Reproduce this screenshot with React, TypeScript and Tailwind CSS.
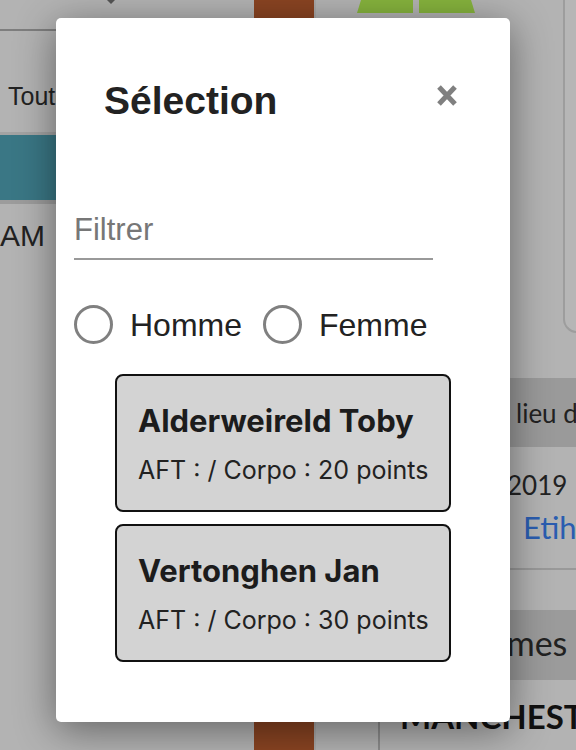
import React from 'react';

type Player = { name: string; aft: string; corpo: number };

const players: Player[] = [
  { name: 'Alderweireld Toby', aft: '', corpo: 20 },
  { name: 'Vertonghen Jan', aft: '', corpo: 30 },
];

function Radio({ label }: { label: string }) {
  return (
    <label className="flex items-center gap-[17px] cursor-pointer">
      <span className="block w-[39px] h-[39px] rounded-full border-[3px] border-[#808080] bg-white" />
      <span className="text-[32px] leading-none text-[#222]">{label}</span>
    </label>
  );
}

function PlayerCard({ p }: { p: Player }) {
  return (
    <div className="w-[336px] h-[138px] rounded-[8px] border-2 border-[#111] bg-[#d3d3d3] pl-[21px] pt-[29px] font-['Inter',sans-serif]">
      <div className="text-[31px] leading-none font-bold text-[#1c1c1c]">{p.name}</div>
      <div className="mt-[22px] text-[25px] leading-none text-[#222]">
        AFT : {p.aft}/ Corpo : {p.corpo} points
      </div>
    </div>
  );
}

export default function App() {
  return (
    <div className="relative w-[576px] h-[750px] overflow-hidden bg-[#b3b3b3] font-['Liberation_Sans',sans-serif]">
      {/* page behind the dialog (already dimmed) */}
      <div className="flex h-full">
        <div className="w-[254px] shrink-0 flex flex-col">
          <div className="h-[31px] border-b-2 border-[#7e7e7e] pl-[104px]">
            <svg width="14" height="6" viewBox="0 0 14 6">
              <path d="M3 0 H11 L7 4 Z" fill="#555" />
            </svg>
          </div>
          <div className="h-[104px] pt-[53px] pl-[8px] text-[25px] leading-none text-[#222] border-b-[3px] border-[#a3a3a3]">
            Toutes
          </div>
          <div className="h-[65px] bg-[#3a7785]" />
          <div className="h-[4px] bg-[#9c9c9c]" />
          <div className="pt-[17px] text-[30px] leading-none text-[#222]">AM</div>
        </div>

        <div className="w-[60px] shrink-0 bg-[#8a4422]" />

        <div className="flex-1 min-w-0 overflow-hidden flex flex-col border-l-2 border-[#a9a9a9] font-['Lato',sans-serif]">
          <div className="flex">
            <div className="w-[247px] shrink-0 pl-[41px]">
              <svg width="118" height="13" viewBox="0 0 118 13">
                <path d="M4 0 H56 V13 H0 Z" fill="#86b33d" />
                <path d="M62 0 H114 L118 13 H62 Z" fill="#86b33d" />
              </svg>
            </div>
            <div className="w-[40px] shrink-0 h-[333px] border-l-2 border-b-2 border-[#9d9d9d] rounded-bl-[14px] bg-[#b6b6b6]" />
          </div>
          <div className="mt-[45px] h-[69px] bg-[#9a9a9a] pl-[200px] pt-[22px] text-[26px] leading-none text-[#222] whitespace-nowrap">
            lieu du match
          </div>
          <div className="pl-[191px] pt-[25px] text-[26px] leading-none text-[#222]">2019</div>
          <div className="pl-[207px] pt-[14px] text-[31px] leading-none text-[#2a5db0] whitespace-nowrap">Etihad</div>
          <div className="mt-[25px] h-[2px] bg-[#999]" />
          <div className="mt-[40px] h-[70px] bg-[#9b9b9b] pl-[118px] pt-[16px] text-[34px] leading-none text-[#222] whitespace-nowrap">
            Hommes
          </div>
          <div className="flex-1 ml-[62px] border-l-2 border-[#8c8c8c] pl-[20px] pt-[20px] text-[33px] leading-none font-bold text-[#111] whitespace-nowrap">
            MANCHESTER
          </div>
        </div>
      </div>

      {/* dialog */}
      <div className="absolute inset-0 pt-[18px] pl-[56px]">
        <div className="w-[454px] h-[704px] bg-white rounded-[5px] shadow-[0_8px_40px_rgba(0,0,0,0.45)] pt-[63px] flex flex-col">
          <div className="flex items-start justify-between pl-[48px] pr-[52px]">
            <h2 className="text-[39px] leading-none font-bold text-[#222]">Sélection</h2>
            <button className="mt-[3px]" aria-label="Fermer">
              <svg width="22" height="23" viewBox="0 0 22 23">
                <path d="M3 3 L19 20 M19 3 L3 20" stroke="#808080" strokeWidth="5" />
              </svg>
            </button>
          </div>

          <input
            placeholder="Filtrer"
            className="ml-[18px] mt-[93px] block w-[359px] h-[47px] pb-[11px] text-[31px] leading-[30px] border-b-2 border-[#999] outline-none bg-transparent placeholder:text-[#777]"
          />

          <div className="ml-[18px] mt-[45px] flex items-center gap-[21px]">
            <Radio label="Homme" />
            <Radio label="Femme" />
          </div>

          <div className="ml-[59px] mt-[30px] flex flex-col gap-[12px]">
            {players.map((p) => (
              <PlayerCard key={p.name} p={p} />
            ))}
          </div>
        </div>
      </div>
    </div>
  );
}
